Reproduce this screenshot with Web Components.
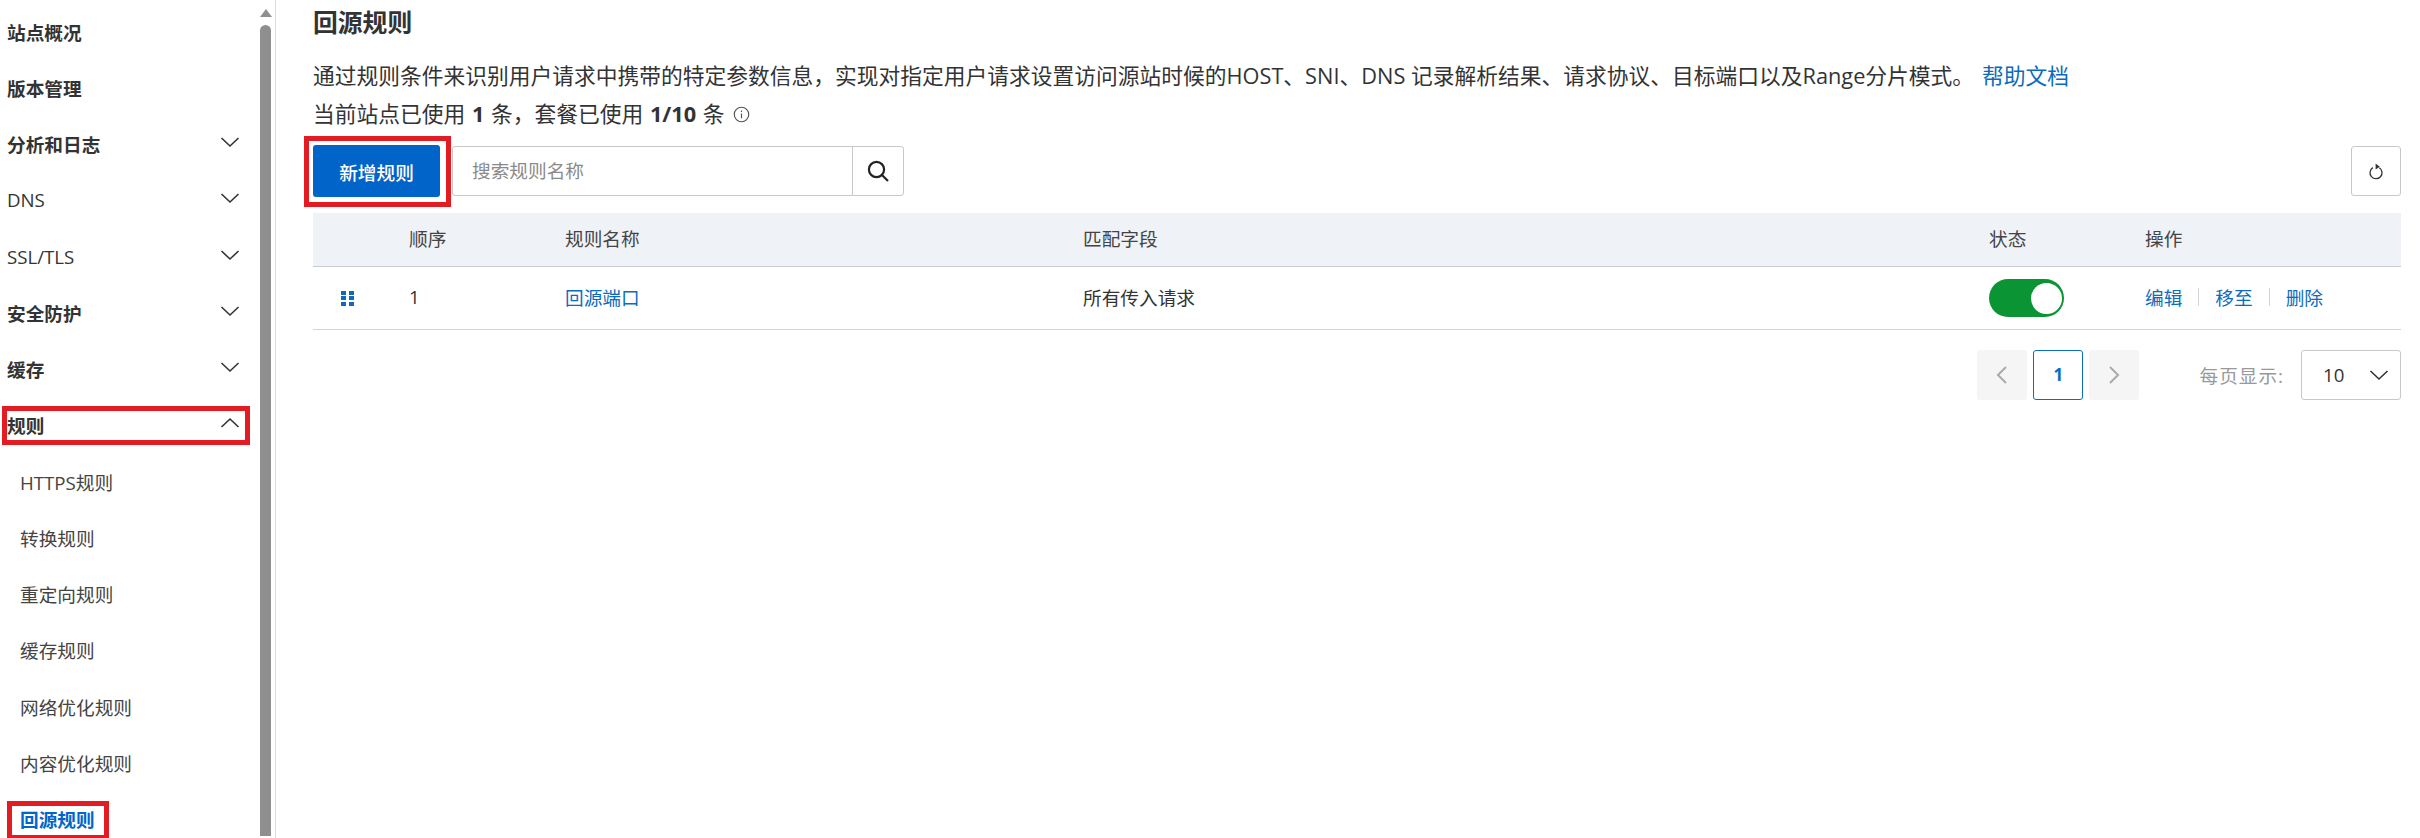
<!DOCTYPE html>
<html lang="zh">
<head>
<meta charset="utf-8">
<title>回源规则</title>
<style>
  html, body { margin: 0; height: 100%; background: #fff; overflow: hidden; }
  body {
    font: 18.67px "Open Sans", "Noto Sans CJK SC", sans-serif;
    color: #333;
  }
</style>
</head>
<body>
<rule-page>
  <side-nav slot="nav">
    <nav-item strong>站点概况</nav-item>
    <nav-item strong>版本管理</nav-item>
    <nav-item strong arrow="down">分析和日志</nav-item>
    <nav-item medium arrow="down">DNS</nav-item>
    <nav-item medium arrow="down">SSL/TLS</nav-item>
    <nav-item strong arrow="down">安全防护</nav-item>
    <nav-item strong arrow="down">缓存</nav-item>
    <nav-item strong arrow="up" marked>规则</nav-item>
    <nav-item sub>HTTPS规则</nav-item>
    <nav-item sub>转换规则</nav-item>
    <nav-item sub>重定向规则</nav-item>
    <nav-item sub>缓存规则</nav-item>
    <nav-item sub>网络优化规则</nav-item>
    <nav-item sub>内容优化规则</nav-item>
    <nav-item sub active marked>回源规则</nav-item>
  </side-nav>
  <page-head slot="main"></page-head>
  <rule-toolbar slot="main"></rule-toolbar>
  <rule-table slot="main"></rule-table>
  <page-bar slot="main"></page-bar>
</rule-page>

<script>
const chevron = (d) => `<svg width="20" height="12" viewBox="0 0 20 12" fill="none" stroke="#333" stroke-width="1.6"><path d="${d}"/></svg>`;

class RulePage extends HTMLElement {
  constructor() {
    super();
    this.attachShadow({ mode: "open" });
    this.shadowRoot.innerHTML = `
      <style>
        :host { display: flex; height: 838px; }
        .main { flex: 1; min-width: 0; padding: 0 19px 0 37px; }
      </style>
      <slot name="nav"></slot>
      <div class="main"><slot name="main"></slot></div>
    `;
  }
}

class SideNav extends HTMLElement {
  constructor() {
    super();
    this.attachShadow({ mode: "open" });
    this.shadowRoot.innerHTML = `
      <style>
        :host {
          display: flex;
          width: 275px;
          height: 838px;
          flex: none;
          border-right: 1px solid #dcdcdc;
          overflow: hidden;
        }
        .list { width: 259px; padding-top: 3px; flex: none; }
        .bar { width: 13px; display: flex; flex-direction: column; align-items: center; }
        .up {
          margin-top: 9px;
          border-left: 6.5px solid transparent;
          border-right: 6.5px solid transparent;
          border-bottom: 8px solid #8f8f8f;
        }
        .thumb {
          width: 11px;
          height: 811px;
          margin-top: 8px;
          background: #8f8f8f;
          border-radius: 6px 6px 0 0;
        }
      </style>
      <div class="list"><slot></slot></div>
      <div class="bar"><div class="up"></div><div class="thumb"></div></div>
    `;
  }
}

class NavItem extends HTMLElement {
  constructor() {
    super();
    this.attachShadow({ mode: "open" });
    const arrow = this.getAttribute("arrow");
    const path = arrow === "up" ? "M1.5 10 L10 2 L18.5 10" : "M1.5 2 L10 10 L18.5 2";
    this.shadowRoot.innerHTML = `
      <style>
        :host {
          display: flex;
          align-items: center;
          justify-content: space-between;
          position: relative;
          height: 56.25px;
          padding: 0 19px 0 7px;
          white-space: nowrap;
          color: #333;
        }
        :host([strong]) { font-weight: 700; }
        :host([medium]) { font-weight: 500; }
        :host([sub]) { padding-left: 20px; color: #444; }
        :host([active]) { color: #0066cc; font-weight: 700; }
        :host([marked])::after {
          content: "";
          position: absolute;
          box-sizing: border-box;
          left: 2px;
          right: 9px;
          top: 9px;
          height: 39px;
          border: 5px solid #e31c23;
          pointer-events: none;
        }
        :host([active][marked])::after { right: 150px; top: 10px; left: 7px; }
        svg { display: block; margin-top: -3px; }
      </style>
      <span><slot></slot></span>
      ${arrow ? chevron(path) : ""}
    `;
  }
}

class PageHead extends HTMLElement {
  constructor() {
    super();
    this.attachShadow({ mode: "open" });
    this.shadowRoot.innerHTML = `
      <style>
        :host { display: block; font-size: 21.75px; }
        h1 { margin: 0; height: 44px; font-size: 24.8px; line-height: 44px; font-weight: 700; color: #333; }
        p { margin: 13px 0 0; line-height: 38px; white-space: nowrap; }
        p + p { margin: 0; display: flex; align-items: center; gap: 8px; word-spacing: 1px; }
        a { color: #0b6bbd; text-decoration: none; margin-left: 8px; }
        b { font-weight: 700; }
        svg { display: block; }
      </style>
      <h1>回源规则</h1>
      <p>通过规则条件来识别用户请求中携带的特定参数信息，实现对指定用户请求设置访问源站时候的HOST、SNI、DNS 记录解析结果、请求协议、目标端口以及Range分片模式。<a>帮助文档</a></p>
      <p><span>当前站点已使用 <b>1</b> 条，套餐已使用 <b>1/10</b> 条</span>
        <svg width="17" height="17" viewBox="0 0 16 16" fill="none" stroke="#555" stroke-width="1.1"><circle cx="8" cy="8" r="6.8"/><path d="M8 7v4.6M8 4.2v1.4"/></svg>
      </p>
    `;
  }
}

class RuleToolbar extends HTMLElement {
  constructor() {
    super();
    this.attachShadow({ mode: "open" });
    this.shadowRoot.innerHTML = `
      <style>
        :host { display: flex; align-items: center; margin-top: 12px; height: 52px; }
        .add {
          position: relative;
          width: 127px;
          height: 52px;
          display: flex;
          align-items: center;
          justify-content: center;
          background: #0064c8;
          color: #fff;
          font-weight: 500;
          border-radius: 3px;
        }
        .add::after {
          content: "";
          position: absolute;
          left: -9px;
          top: -9px;
          width: 147px;
          height: 71px;
          box-sizing: border-box;
          border: 5px solid #e31c23;
        }
        .search {
          margin-left: 12px;
          width: 452px;
          height: 50px;
          box-sizing: border-box;
          display: flex;
          border: 1px solid #c8c8c8;
          border-radius: 3px;
        }
        .ph { flex: 1; padding-left: 19px; line-height: 48px; color: #8a8a8a; }
        .go { width: 50px; border-left: 1px solid #c8c8c8; display: flex; align-items: center; justify-content: center; }
        .reload {
          margin-left: auto;
          width: 50px;
          height: 50px;
          box-sizing: border-box;
          border: 1px solid #c8c8c8;
          border-radius: 3px;
          display: flex;
          align-items: center;
          justify-content: center;
        }
        svg { display: block; }
      </style>
      <div class="add">新增规则</div>
      <div class="search">
        <div class="ph">搜索规则名称</div>
        <div class="go">
          <svg width="24" height="24" viewBox="0 0 24 24" fill="none" stroke="#222" stroke-width="2.2"><circle cx="10.5" cy="10.5" r="7.6"/><path d="M16 16l6 6"/></svg>
        </div>
      </div>
      <div class="reload">
        <svg width="16" height="18" viewBox="0 0 16 18" fill="none" stroke="#333" stroke-width="1.3"><path d="M4.9 5.6a6 6 0 1 0 6.4 0.1"/><path d="M7.6 1.6l4.2 3.2-4.2 2.6z" fill="#333" stroke="none"/></svg>
      </div>
    `;
  }
}

class RuleTable extends HTMLElement {
  constructor() {
    super();
    this.attachShadow({ mode: "open" });
    this.shadowRoot.innerHTML = `
      <style>
        :host { display: block; margin-top: 16px; }
        .row {
          display: grid;
          grid-template-columns: 96px 156px 518px 906px 156px 1fr;
          align-items: center;
        }
        .head { height: 53px; background: #eff2f7; border-bottom: 1px solid #c9ccd2; color: #444; }
        .head span { margin-top: -4px; }
        .body { height: 62px; border-bottom: 1px solid #d4d4d4; }
        .body > span, .body > a, .ops { margin-top: -3px; }
        a { color: #0b6bbd; text-decoration: none; }
        .grip { display: grid; grid-template-columns: 5px 5px; gap: 1.5px 3px; margin-left: 28px; width: 13px; }
        .grip i { width: 5px; height: 4px; background: #0b6bbd; }
        .switch {
          width: 75px;
          height: 38px;
          border-radius: 19px;
          background: #0a9433;
          display: flex;
          align-items: center;
          justify-content: flex-end;
          padding-right: 2px;
          box-sizing: border-box;
        }
        .switch i { width: 31px; height: 31px; border-radius: 50%; background: #fff; }
        .ops { display: flex; align-items: center; white-space: nowrap; }
        .ops i { width: 1px; height: 18px; background: #d4d4d4; margin: 0 16px; }
      </style>
      <div class="row head">
        <span></span><span>顺序</span><span>规则名称</span><span>匹配字段</span><span>状态</span><span>操作</span>
      </div>
      <div class="row body">
        <div class="grip"><i></i><i></i><i></i><i></i><i></i><i></i></div>
        <span>1</span>
        <a>回源端口</a>
        <span>所有传入请求</span>
        <div class="switch"><i></i></div>
        <div class="ops"><a>编辑</a><i></i><a>移至</a><i></i><a>删除</a></div>
      </div>
    `;
  }
}

class PageBar extends HTMLElement {
  constructor() {
    super();
    this.attachShadow({ mode: "open" });
    this.shadowRoot.innerHTML = `
      <style>
        :host { display: flex; justify-content: flex-end; align-items: center; margin-top: 19px; height: 51px; }
        .btn {
          width: 50px;
          height: 50px;
          box-sizing: border-box;
          margin-right: 6px;
          border-radius: 3px;
          background: #f5f5f5;
          display: flex;
          align-items: center;
          justify-content: center;
        }
        .cur {
          background: #fff;
          border: 1.5px solid #0b6bbd;
          color: #0b6bbd;
          font-weight: 700;
          font-size: 17px;
        }
        .btn.next { margin-right: 60px; }
        .label { color: #999; margin-right: 17px; white-space: nowrap; letter-spacing: 1px; }
        .select {
          width: 100px;
          height: 50px;
          box-sizing: border-box;
          border: 1px solid #c8c8c8;
          border-radius: 3px;
          display: flex;
          align-items: center;
          justify-content: space-between;
          padding: 0 11px 0 21px;
        }
        svg { display: block; }
      </style>
      <div class="btn"><svg width="14" height="20" viewBox="0 0 14 20" fill="none" stroke="#aaa" stroke-width="2"><path d="M11 2 L3 10 L11 18"/></svg></div>
      <div class="btn cur">1</div>
      <div class="btn next"><svg width="14" height="20" viewBox="0 0 14 20" fill="none" stroke="#aaa" stroke-width="2"><path d="M3 2 L11 10 L3 18"/></svg></div>
      <span class="label">每页显示:</span>
      <div class="select"><span>10</span>${chevron("M1.5 2 L10 10 L18.5 2")}</div>
    `;
  }
}

customElements.define("rule-page", RulePage);
customElements.define("side-nav", SideNav);
customElements.define("nav-item", NavItem);
customElements.define("page-head", PageHead);
customElements.define("rule-toolbar", RuleToolbar);
customElements.define("rule-table", RuleTable);
customElements.define("page-bar", PageBar);
</script>
</body>
</html>
